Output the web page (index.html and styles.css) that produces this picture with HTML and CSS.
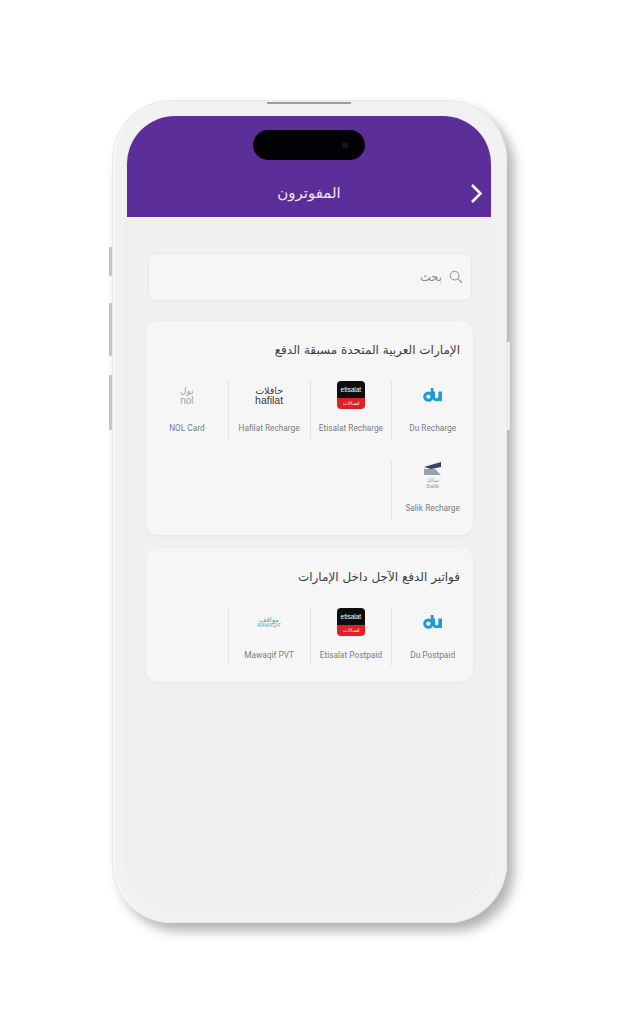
FILE: index.html
```html
<!DOCTYPE html>
<html lang="ar" dir="rtl">
<head>
    <meta charset="UTF-8">
    <meta name="viewport" content="width=device-width, initial-scale=1.0">
    <title>المفوترون</title>
    <link rel="stylesheet" href="styles.css">
</head>
<body>
    <div class="phone">
        <span class="speaker"></span>
        <span class="side-btn btn-mute"></span>
        <span class="side-btn btn-vol-up"></span>
        <span class="side-btn btn-vol-down"></span>
        <span class="side-btn btn-power"></span>

        <div class="screen">
            <div class="island"><span class="camera"></span></div>

            <div class="header">
                <svg class="back" width="13" height="21" viewBox="0 0 13 21">
                    <path d="M2 2l8.5 8.5L2 19" fill="none" stroke="#fff" stroke-width="2.6"/>
                </svg>
                <h1>المفوترون</h1>
            </div>

            <div class="content">
                <div class="search">
                    <svg width="14" height="14" viewBox="0 0 14 14">
                        <circle cx="5.6" cy="5.6" r="4.4" fill="none" stroke="#8d8d8d" stroke-width="1"/>
                        <path d="M8.9 8.9l4 4" stroke="#8d8d8d" stroke-width="1.2"/>
                    </svg>
                    <span>بحث</span>
                </div>

                <div class="card">
                    <h2>الإمارات العربية المتحدة مسبقة الدفع</h2>
                    <div class="biller-grid">
                        <div class="biller">
                            <div class="logo">
                                <svg width="20" height="16" viewBox="0 0 20 16">
                                    <circle cx="5.4" cy="9.6" r="3.7" fill="none" stroke="#1b9bd8" stroke-width="3"/>
                                    <path d="M9.1 1v8.6M10.6 4.5v5.2a3.1 3.1 0 0 0 6.2 0V4.5M17.6 4.5V14" fill="none" stroke="#1b9bd8" stroke-width="2.8"/>
                                </svg>
                            </div>
                            <span class="label">Du Recharge</span>
                        </div>
                        <div class="biller">
                            <div class="logo">
                                <div class="etisalat">
                                    <span class="eti-top">etisalat</span>
                                    <span class="eti-bottom">اتصالات</span>
                                </div>
                            </div>
                            <span class="label">Etisalat Recharge</span>
                        </div>
                        <div class="biller">
                            <div class="logo">
                                <div class="wordmark hafilat">
                                    <span class="ar">حافلات</span>
                                    <span>hafilat</span>
                                </div>
                            </div>
                            <span class="label">Hafilat Recharge</span>
                        </div>
                        <div class="biller">
                            <div class="logo">
                                <div class="wordmark nol">
                                    <span class="ar">نول</span>
                                    <span>nol</span>
                                </div>
                            </div>
                            <span class="label">NOL Card</span>
                        </div>
                        <div class="biller">
                            <div class="logo">
                                <div class="salik">
                                    <svg width="17" height="14" viewBox="0 0 17 14">
                                        <polygon points="0,5 17,0 17,5 7,7" fill="#3b4260"/>
                                        <polygon points="0,7 11,7 17,13 0,13" fill="#9aa0b0"/>
                                    </svg>
                                    <span class="ar">سالك</span>
                                    <span>Salik</span>
                                </div>
                            </div>
                            <span class="label">Salik Recharge</span>
                        </div>
                    </div>
                </div>

                <div class="card">
                    <h2>فواتير الدفع الآجل داخل الإمارات</h2>
                    <div class="biller-grid">
                        <div class="biller">
                            <div class="logo">
                                <svg width="20" height="16" viewBox="0 0 20 16">
                                    <circle cx="5.4" cy="9.6" r="3.7" fill="none" stroke="#1b9bd8" stroke-width="3"/>
                                    <path d="M9.1 1v8.6M10.6 4.5v5.2a3.1 3.1 0 0 0 6.2 0V4.5M17.6 4.5V14" fill="none" stroke="#1b9bd8" stroke-width="2.8"/>
                                </svg>
                            </div>
                            <span class="label">Du Postpaid</span>
                        </div>
                        <div class="biller">
                            <div class="logo">
                                <div class="etisalat">
                                    <span class="eti-top">etisalat</span>
                                    <span class="eti-bottom">اتصالات</span>
                                </div>
                            </div>
                            <span class="label">Etisalat Postpaid</span>
                        </div>
                        <div class="biller">
                            <div class="logo">
                                <div class="wordmark mawaqif">
                                    <span class="ar">مواقف</span>
                                    <span>MAWAQIF</span>
                                </div>
                            </div>
                            <span class="label">Mawaqif PVT</span>
                        </div>
                    </div>
                </div>
            </div>
        </div>
    </div>
</body>
</html>
```

FILE: styles.css
```css
body {
    margin: 0;
    padding: 100px 111px 101px 112px;
    background: #fff;
    font-family: "DejaVu Sans", sans-serif;
}
h1, h2 {
    margin: 0;
    font-weight: normal;
}

/* device frame */
.phone {
    position: relative;
    box-sizing: border-box;
    width: 395px;
    height: 823px;
    padding: 16px 16px 15px 15px;
    background: #f1f1f1;
    border-radius: 60px;
    box-shadow: inset 0 0 0 1px #e9e9e9, inset 3px 0 2px #f8f8f8, 7px 8px 12px rgba(0,0,0,0.3);
}
.speaker {
    position: absolute;
    top: 2px;
    left: 155px;
    width: 84px;
    height: 1.5px;
    background: #9c9c9c;
}
.side-btn {
    position: absolute;
    width: 3px;
    background: #c4c4c4;
}
.btn-mute { left: -3px; top: 147px; height: 29px; }
.btn-vol-up { left: -3px; top: 203px; height: 53px; }
.btn-vol-down { left: -3px; top: 275px; height: 55px; }
.btn-power { right: -3px; top: 242px; height: 88px; width: 3px; background: #ececec; }

.screen {
    position: relative;
    height: 100%;
    background: #f0f0f0;
    border-radius: 48px;
    box-shadow: 0 0 0 1px #ececec;
    overflow: hidden;
}
.island {
    position: absolute;
    z-index: 1;
    top: 14px;
    left: 126px;
    width: 112px;
    height: 30px;
    background: #020104;
    border-radius: 15px;
}
.camera {
    position: absolute;
    top: 12px;
    right: 17px;
    width: 6px;
    height: 6px;
    border-radius: 50%;
    background: #101a22;
}

.header {
    position: relative;
    display: flex;
    justify-content: center;
    box-sizing: border-box;
    height: 101px;
    padding-top: 65px;
    background: #5c2e9a;
}
.header h1 {
    color: #ece6f5;
    font-size: 15px;
    line-height: 24px;
}
.back {
    position: absolute;
    top: 67px;
    right: 8px;
}

.content {
    padding: 37px 18px 0 19px;
}
.search {
    display: flex;
    align-items: center;
    gap: 7px;
    box-sizing: border-box;
    height: 46px;
    margin: 0 2px 21px 3px;
    padding: 0 8px;
    background: #f6f6f6;
    border-radius: 7px;
    box-shadow: 0 0 2px rgba(0,0,0,0.12);
    color: #8a8a8a;
    font-size: 11.5px;
}

.card {
    padding: 19px 0 16px;
    margin-bottom: 13px;
    background: #f6f6f6;
    border-radius: 12px;
    box-shadow: 0 1px 3px rgba(0,0,0,0.06);
}
.card h2 {
    padding: 0 13px;
    margin-bottom: 21px;
    color: #3f3f3f;
    font-size: 12px;
    line-height: 20px;
}
.biller-grid {
    display: grid;
    grid-template-columns: repeat(4, 1fr);
    row-gap: 22px;
}
.biller {
    display: flex;
    flex-direction: column;
    align-items: center;
    box-sizing: border-box;
    height: 58px;
    border-left: 1px solid #e4e4e4;
}
.biller:nth-child(4) {
    border-left: none;
}
.logo {
    display: flex;
    align-items: center;
    justify-content: center;
    height: 28px;
    margin-bottom: 12px;
}
.label {
    font-family: Roboto, sans-serif;
    font-size: 8.3px;
    line-height: 14px;
    color: #7c7c7c;
    white-space: nowrap;
    direction: ltr;
}

/* biller logos */
.etisalat {
    display: flex;
    flex-direction: column;
    width: 28px;
    height: 28px;
    border-radius: 4px;
    overflow: hidden;
    text-align: center;
    color: #fff;
    font-family: "Liberation Sans", sans-serif;
}
.eti-top {
    height: 17px;
    background: #0d0d0d;
    font-size: 6.5px;
    line-height: 17px;
}
.eti-bottom {
    height: 11px;
    background: #e01f26;
    font-size: 5px;
    line-height: 11px;
}
.wordmark {
    display: flex;
    flex-direction: column;
    align-items: center;
    direction: ltr;
    font-family: "Liberation Sans", sans-serif;
}
.hafilat {
    color: #3a3a3a;
    font-size: 10.5px;
    line-height: 9px;
}
.hafilat .ar {
    font-family: "DejaVu Sans", sans-serif;
    font-size: 9.5px;
    line-height: 11px;
}
.nol {
    color: #a5a5a5;
    font-size: 10px;
    line-height: 9px;
}
.nol .ar {
    font-family: "DejaVu Sans", sans-serif;
    font-size: 9px;
    line-height: 10px;
}
.mawaqif {
    color: #4fa9a6;
    font-size: 4.5px;
    line-height: 5px;
    letter-spacing: 0.4px;
}
.mawaqif .ar {
    font-family: "DejaVu Sans", sans-serif;
    font-size: 7px;
    line-height: 6px;
    letter-spacing: 0;
}
.salik {
    display: flex;
    flex-direction: column;
    align-items: center;
    color: #9a9a9a;
    font-family: "Liberation Sans", sans-serif;
    font-size: 6px;
    line-height: 6px;
    direction: ltr;
}
.salik svg {
    margin-bottom: 1px;
}
.salik .ar {
    font-family: "DejaVu Sans", sans-serif;
    font-size: 5.5px;
}
```
